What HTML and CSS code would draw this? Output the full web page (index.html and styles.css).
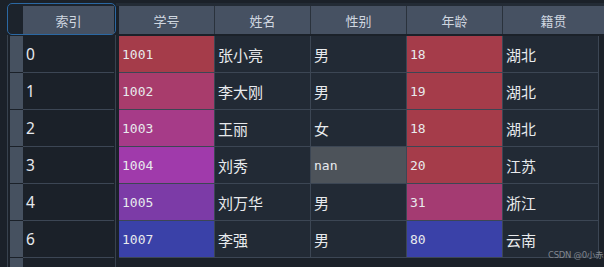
FILE: index.html
```html
<!DOCTYPE html>
<html lang="zh">
<head>
<meta charset="utf-8">
<link rel="stylesheet" href="styles.css">
</head>
<body>
<div class="app">
  <div class="idx-panel">
    <div class="idx-head"><div class="idx-head-cell">索引</div></div>
    <div class="idx-body">
      <div class="idx-row"><span class="stripe"></span><span class="idx-cell">0</span></div>
      <div class="idx-row"><span class="stripe"></span><span class="idx-cell">1</span></div>
      <div class="idx-row"><span class="stripe"></span><span class="idx-cell">2</span></div>
      <div class="idx-row"><span class="stripe"></span><span class="idx-cell">3</span></div>
      <div class="idx-row"><span class="stripe"></span><span class="idx-cell">4</span></div>
      <div class="idx-row"><span class="stripe"></span><span class="idx-cell">6</span></div>
      <div class="idx-row"><span class="stripe"></span><span class="idx-cell"></span></div>
    </div>
  </div>
  <div class="main-panel">
    <div class="head-grid">
      <div class="hcell">学号</div>
      <div class="hcell">姓名</div>
      <div class="hcell">性别</div>
      <div class="hcell">年龄</div>
      <div class="hcell">籍贯</div>
    </div>
    <div class="body-grid">
      <div class="cell num id1">1001</div><div class="cell">张小亮</div><div class="cell">男</div><div class="cell num red">18</div><div class="cell">湖北</div>
      <div class="cell num id2">1002</div><div class="cell">李大刚</div><div class="cell">男</div><div class="cell num red">19</div><div class="cell">湖北</div>
      <div class="cell num id3">1003</div><div class="cell">王丽</div><div class="cell">女</div><div class="cell num red">18</div><div class="cell">湖北</div>
      <div class="cell num id4">1004</div><div class="cell">刘秀</div><div class="cell num nan">nan</div><div class="cell num red">20</div><div class="cell">江苏</div>
      <div class="cell num id5">1005</div><div class="cell">刘万华</div><div class="cell">男</div><div class="cell num pink">31</div><div class="cell">浙江</div>
      <div class="cell num id7">1007</div><div class="cell">李强</div><div class="cell">男</div><div class="cell num blue">80</div><div class="cell">云南</div>
    </div>
  </div>
  <div class="watermark">CSDN @0小赤</div>
</div>
</body>
</html>
```
FILE: styles.css
```css
html, body {
  margin: 0;
  height: 100%;
}
body {
  background: #1b2129;
  overflow: hidden;
  font-family: "Noto Sans", "Noto Sans CJK SC", sans-serif;
}
.app {
  display: flex;
  height: 267px;
  padding-left: 7px;
  position: relative;
  overflow: hidden;
}
.idx-panel {
  width: 109px;
  flex: none;
  display: flex;
  flex-direction: column;
  padding-top: 3px;
}
.idx-head {
  flex: none;
  height: 32px;
  box-sizing: border-box;
  border: 1px solid #2b68a3;
  border-radius: 5px;
  padding: 2px 1px 0 15px;
  display: flex;
  background: #1c232c;
}
.idx-head-cell {
  flex: 1;
  background: #465162;
  color: #d0d7e0;
  font-family: "Noto Sans CJK SC", sans-serif;
  font-size: 13px;
  display: flex;
  align-items: center;
  justify-content: center;
}
.idx-body {
  flex: 1;
  min-height: 0;
  overflow: hidden;
  border-left: 1px solid #38424e;
  border-right: 1px solid #38424e;
  padding-top: 1px;
}
.idx-row {
  display: flex;
  height: 37px;
}
.stripe {
  margin-left: 2px;
  width: 13px;
  height: 36px;
  background: #465160;
}
.idx-cell {
  width: 91px;
  height: 37px;
  box-sizing: border-box;
  border-bottom: 1px solid #3c4654;
  padding-left: 3px;
  display: flex;
  align-items: center;
  color: #e6e9ee;
  font-size: 15.5px;
}
.main-panel {
  flex: 1;
  padding: 6px 0 0 3px;
  background: linear-gradient(#1b2129 0 3px, #232b35 3px 6px, transparent 6px);
}
.head-grid {
  display: grid;
  grid-template-columns: repeat(4, 95px) 1fr;
  column-gap: 1px;
  background: #2a323c;
  height: 28px;
}
.hcell {
  background: #465162;
  color: #d0d7e0;
  font-family: "Noto Sans CJK SC", sans-serif;
  font-size: 13px;
  display: flex;
  align-items: center;
  justify-content: center;
}
.body-grid {
  margin-top: 2px;
  display: grid;
  grid-template-columns: repeat(5, 95px);
  grid-auto-rows: 36px;
  gap: 1px;
  padding: 0 1px 1px 0;
  background: #3c4654;
  width: max-content;
}
.cell {
  background: #222a35;
  color: #e8eaed;
  font-family: "Noto Sans CJK SC", sans-serif;
  font-size: 15px;
  padding-left: 3px;
  display: flex;
  align-items: center;
}
.num {
  font-family: "DejaVu Sans Mono", monospace;
  font-size: 13px;
}
.id1, .red { background: #a53c4a; }
.id2 { background: #a83c6c; }
.id3 { background: #a63b88; }
.id4 { background: #a03aab; }
.id5 { background: #7c3ba7; }
.id7, .blue { background: #3a41a8; }
.pink { background: #a43b72; }
.nan { background: #4d535a; }
.watermark {
  position: absolute;
  left: 548px;
  top: 248px;
  white-space: nowrap;
  font-family: "DejaVu Sans", "Noto Sans CJK SC", sans-serif;
  font-size: 8.5px;
  color: #80868e;
  letter-spacing: -0.3px;
}
```
